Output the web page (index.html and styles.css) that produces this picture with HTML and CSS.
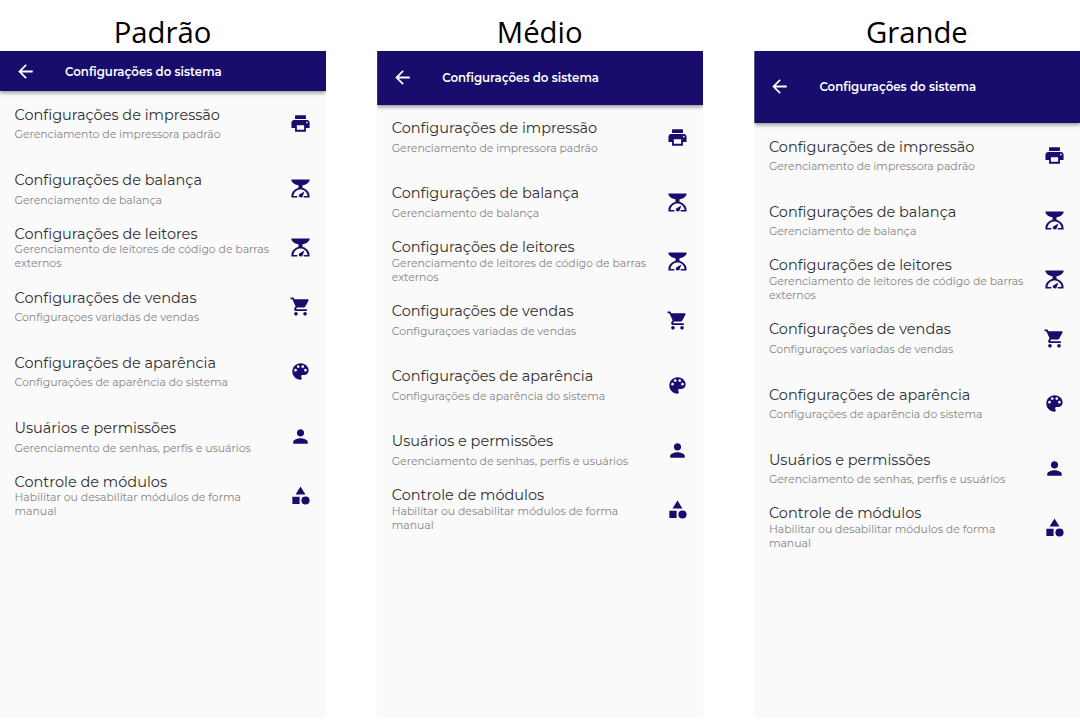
FILE: index.html
```
<!DOCTYPE html>
<html lang="pt-BR">
<head>
<meta charset="utf-8">
<title>Configurações do sistema</title>
<link rel="stylesheet" href="styles.css">
</head>
<body>
<svg class="sprite" aria-hidden="true">
  <symbol id="back" viewBox="0 0 24 24"><path d="M20 11H7.83l5.59-5.59L12 4l-8 8 8 8 1.41-1.41L7.83 13H20v-2z"/></symbol>
  <symbol id="print" viewBox="0 0 24 24"><path d="M19 8H5c-1.66 0-3 1.34-3 3v6h4v4h12v-4h4v-6c0-1.66-1.34-3-3-3zm-3 11H8v-5h8v5zm3-7c-.55 0-1-.45-1-1s.45-1 1-1 1 .45 1 1-.45 1-1 1zm-1-9H6v4h12V3z"/></symbol>
  <symbol id="scale" viewBox="0 0 24 24"><path d="M2 22v-2c0-3.500 2.500-7 7.800-8.900V8.500C6 8 3 6 2 3.500V2h20v1.500c-1 2.500-4 4.500-7.800 5v2.600C19.500 13 22 16.500 22 20v2h-6.500v-1.800h4.300C19.300 16 16 13.100 12 13.100S4.700 16 4.200 20.200h4.300V22zM16.300 15.200l-1.900 5.300c-.5 1.200-1.600 1.600-2.800 1.300-1.500-.4-2-2-1-3.100z"/></symbol>
  <symbol id="cart" viewBox="0 0 24 24"><path d="M7 18c-1.100 0-1.990.9-1.990 2S5.900 22 7 22s2-.9 2-2-.9-2-2-2zM1 2v2h2l3.600 7.590-1.350 2.450c-.16.28-.25.61-.25.96 0 1.100.9 2 2 2h12v-2H7.420c-.14 0-.25-.11-.25-.25l.03-.12.9-1.630h7.450c.75 0 1.410-.41 1.750-1.030l3.580-6.490c.08-.14.12-.31.12-.48 0-.55-.45-1-1-1H5.210l-.94-2H1zm16 16c-1.100 0-1.990.9-1.990 2s.89 2 1.990 2 2-.9 2-2-.9-2-2-2z"/></symbol>
  <symbol id="palette" viewBox="0 0 24 24"><path d="M12 3c-4.970 0-9 4.030-9 9s4.030 9 9 9c.83 0 1.500-.67 1.500-1.500 0-.39-.15-.74-.39-1.010-.23-.26-.38-.61-.38-.99 0-.83.67-1.500 1.500-1.500H16c2.760 0 5-2.240 5-5 0-4.420-4.030-8-9-8zm-5.500 9c-.83 0-1.500-.67-1.500-1.500S5.670 9 6.500 9 8 9.670 8 10.500 7.330 12 6.500 12zm3-4C8.670 8 8 7.330 8 6.500S8.670 5 9.500 5s1.500.67 1.500 1.500S10.330 8 9.500 8zm5 0c-.83 0-1.500-.67-1.500-1.500S13.670 5 14.500 5s1.500.67 1.500 1.500S15.330 8 14.500 8zm3 4c-.83 0-1.500-.67-1.500-1.500S16.670 9 17.500 9s1.500.67 1.500 1.500-.67 1.500-1.500 1.500z"/></symbol>
  <symbol id="person" viewBox="0 0 24 24"><path d="M12 12c2.210 0 4-1.790 4-4s-1.790-4-4-4-4 1.790-4 4 1.790 4 4 4zm0 2c-2.670 0-8 1.340-8 4v2h16v-2c0-2.660-5.330-4-8-4z"/></symbol>
  <symbol id="shapes" viewBox="0 0 24 24"><path d="M12 2l-5.500 9h11zM3 13.500h8v8H3z"/><circle cx="17.500" cy="17.500" r="4.500"/></symbol>
</svg>
<main class="board" id="board"></main>
<script src="app.js"></script>
</body>
</html>
```
FILE: styles.css
```
* { box-sizing: border-box; }
body { margin: 0; background: #fff; font-family: Montserrat, Inter, sans-serif; }
.sprite { display: none; }
.board { width: 1080px; height: 720px; display: grid; grid-template-columns: 326px 326px 326px; column-gap: 51.2px; overflow: hidden; }
.column { display: flex; flex-direction: column; height: 718px; }
.caption { margin: 0; height: 51px; flex: none; padding: 12px 1px 0 0; text-align: center; font: 400 29.3px/41px "Open Sans", "Noto Sans", sans-serif; color: #000; }
.screen { flex: 1; background: #fafafa; }
.appbar { display: flex; align-items: center; padding-left: 14px; background: #180c6c; color: #fff; box-shadow: 0 2px 4px rgba(0, 0, 0, .4); clip-path: inset(0 0 -10px 0); }
.appbar--default { height: 40px; }
.appbar--medium { height: 53.6px; }
.appbar--large { height: 71.8px; }
.appbar__title { margin: 1px 0 0 28px; font-size: 11.8px; font-weight: 600; line-height: 18px; white-space: nowrap; }
.icon { width: 23px; height: 23px; flex: none; fill: currentColor; display: block; }
.list { margin: 0; padding: 0; list-style: none; }
.row { height: 65.1px; display: flex; align-items: center; justify-content: space-between; padding: 0 14px 0 14.5px; color: #180c6c; }
.row--double { height: 52.7px; }
.row__text { padding-top: 0.7px; }
.row--double .row__text { padding-top: 0; }
.row__title { font-size: 14.5px; font-weight: 400; line-height: 18px; color: #303030; white-space: nowrap; }
.row__sub { margin-top: 4.7px; font-size: 10.9px; font-weight: 400; line-height: 13.5px; color: #858585; white-space: nowrap; }
.row__sub span, .row__title span, .appbar__title span { display: inline-block; }
.row--double .row__sub { margin-top: 0.9px; }
.line { display: block; }
```
FILE: app.js
```
// Each text is [content, line width in px]; tracking is derived from the width.
const appTitle = ["Configurações do sistema", 156.8];
const items = [
  { icon: "print", title: ["Configurações de impressão", 205.5], sub: [["Gerenciamento de impressora padrão", 206]] },
  { icon: "scale", title: ["Configurações de balança", 187.5], sub: [["Gerenciamento de balança", 147.5]] },
  { icon: "scale", title: ["Configurações de leitores", 183], sub: [["Gerenciamento de leitores de código de barras", 254.5], ["externos", 47]] },
  { icon: "cart", title: ["Configurações de vendas", 182], sub: [["Configuraçoes variadas de vendas", 184.5]] },
  { icon: "palette", title: ["Configurações de aparência", 201.5], sub: [["Configurações de aparência do sistema", 213.5]] },
  { icon: "person", title: ["Usuários e permissões", 161.5], sub: [["Gerenciamento de senhas, perfis e usuários", 236.5]] },
  { icon: "shapes", title: ["Controle de módulos", 152.5], sub: [["Habilitar ou desabilitar módulos de forma", 226.5], ["manual", 42]] },
];
const sizes = [["Padrão", "default"], ["Médio", "medium"], ["Grande", "large"]];

const icon = (name) => `<svg class="icon" viewBox="-0.7 -0.7 25.4 25.4" aria-hidden="true"><use href="#${name}" width="24" height="24"/></svg>`;
const fitted = ([text, width]) => `<span data-width="${width}">${text}</span>`;
const row = ({ icon: name, title, sub }) => `
  <li class="row${sub.length > 1 ? " row--double" : ""}">
    <div class="row__text">
      <div class="row__title">${fitted(title)}</div>
      <div class="row__sub">${sub.map((s) => `<div class="line">${fitted(s)}</div>`).join("")}</div>
    </div>
    ${icon(name)}
  </li>`;

document.getElementById("board").innerHTML = sizes.map(([label, size]) => `
  <section class="column">
    <h2 class="caption">${label}</h2>
    <div class="screen">
      <header class="appbar appbar--${size}">${icon("back")}<h1 class="appbar__title">${fitted(appTitle)}</h1></header>
      <ul class="list">${items.map(row).join("")}</ul>
    </div>
  </section>`).join("");

document.querySelectorAll("[data-width]").forEach((el) => {
  const gap = (el.dataset.width - el.getBoundingClientRect().width) / el.textContent.length;
  el.style.letterSpacing = `${gap.toFixed(3)}px`;
});
```
